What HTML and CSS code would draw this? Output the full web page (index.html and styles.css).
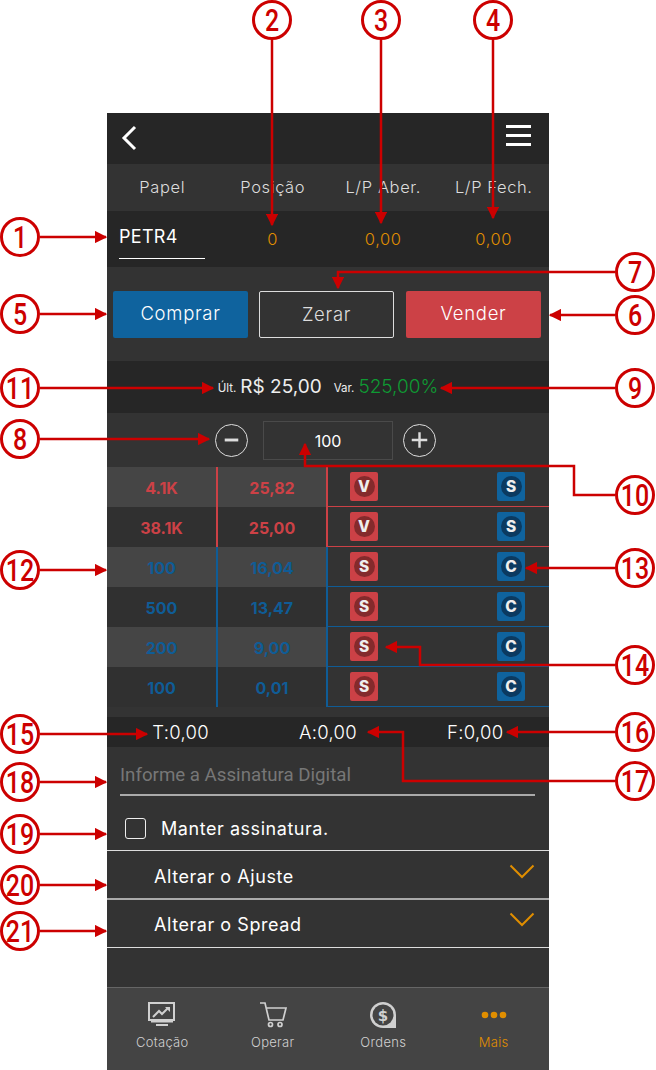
FILE: index.html
```html
<!DOCTYPE html>
<html lang="pt-BR">
<head>
    <meta charset="UTF-8">
    <meta name="viewport" content="width=device-width, initial-scale=1.0">
    <title>Boleta</title>
    <link rel="stylesheet" href="styles.css">
</head>
<body>
    <div class="phone">
        <div class="top_bar">
            <svg class="back_icon" width="16" height="26" viewBox="0 0 16 26"><path d="M14 2 L3 13 L14 24" fill="none" stroke="#fff" stroke-width="3"/></svg>
            <div class="menu_icon"><span></span><span></span><span></span></div>
        </div>

        <div class="labels">
            <div>Papel</div>
            <div>Posição</div>
            <div>L/P Aber.</div>
            <div>L/P Fech.</div>
        </div>

        <div class="values">
            <div class="paper"><span>PETR4</span></div>
            <div>0</div>
            <div>0,00</div>
            <div>0,00</div>
        </div>

        <div class="actions">
            <button class="btn buy">Comprar</button>
            <button class="btn clear">Zerar</button>
            <button class="btn sell">Vender</button>
        </div>

        <div class="quote">
            <span class="small">Últ.</span>
            <span class="price">R$ 25,00</span>
            <span class="small var">Var.</span>
            <span class="price green">525,00%</span>
        </div>

        <div class="quantity">
            <button class="round"><svg width="32" height="32" viewBox="0 0 32 32"><path d="M9 16 H23" stroke="#ddd" stroke-width="3"/></svg></button>
            <div class="qty_box">100</div>
            <button class="round"><svg width="32" height="32" viewBox="0 0 32 32"><path d="M8 16 H24 M16 8 V24" stroke="#ddd" stroke-width="2.500"/></svg></button>
        </div>

        <div class="book">
            <div class="row ask shade">
                <div class="cell">4.1K</div><div class="cell mid">25,82</div>
                <div class="acts"><span class="chip red"><i>V</i></span><span class="chip blue"><i>S</i></span></div>
            </div>
            <div class="row ask">
                <div class="cell">38.1K</div><div class="cell mid">25,00</div>
                <div class="acts"><span class="chip red"><i>V</i></span><span class="chip blue"><i>S</i></span></div>
            </div>
            <div class="row bid shade">
                <div class="cell">100</div><div class="cell mid">16,04</div>
                <div class="acts"><span class="chip red"><i>S</i></span><span class="chip blue"><i>C</i></span></div>
            </div>
            <div class="row bid">
                <div class="cell">500</div><div class="cell mid">13,47</div>
                <div class="acts"><span class="chip red"><i>S</i></span><span class="chip blue"><i>C</i></span></div>
            </div>
            <div class="row bid shade">
                <div class="cell">200</div><div class="cell mid">9,00</div>
                <div class="acts"><span class="chip red"><i>S</i></span><span class="chip blue"><i>C</i></span></div>
            </div>
            <div class="row bid">
                <div class="cell">100</div><div class="cell mid">0,01</div>
                <div class="acts"><span class="chip red"><i>S</i></span><span class="chip blue"><i>C</i></span></div>
            </div>
        </div>

        <div class="totals">
            <div>T:0,00</div>
            <div>A:0,00</div>
            <div>F:0,00</div>
        </div>

        <div class="signature">
            <input type="text" placeholder="Informe a Assinatura Digital">
        </div>

        <label class="keep">
            <span class="check"></span>
            <span>Manter assinatura.</span>
        </label>

        <div class="fold first">
            <span>Alterar o Ajuste</span>
            <svg width="26" height="15" viewBox="0 0 26 15"><path d="M1.500 1.500 L13 13 L24.500 1.500" fill="none" stroke="#e08e00" stroke-width="2"/></svg>
        </div>
        <div class="fold">
            <span>Alterar o Spread</span>
            <svg width="26" height="15" viewBox="0 0 26 15"><path d="M1.500 1.500 L13 13 L24.500 1.500" fill="none" stroke="#e08e00" stroke-width="2"/></svg>
        </div>

        <div class="spacer"></div>

        <div class="nav">
            <div class="nav_item">
                <svg width="28" height="26" viewBox="0 0 28 26" fill="none" stroke="#d0d0d0">
                    <rect x="1" y="1" width="25" height="17" stroke-width="2"/>
                    <path d="M5 15 L11 9 L14 12 L20 6" stroke-width="2"/>
                    <path d="M17 5 H22 V10 Z" fill="#d0d0d0" stroke="none"/>
                    <path d="M3 19.500 H25 M8 23 H20" stroke-width="2"/>
                </svg>
                <span>Cotação</span>
            </div>
            <div class="nav_item">
                <svg width="28" height="26" viewBox="0 0 28 26" fill="none" stroke="#d0d0d0" stroke-width="1.700">
                    <path d="M1 1 H6 L10 18 H24 L27 6 H7"/>
                    <circle cx="11.500" cy="22.500" r="2"/>
                    <circle cx="21" cy="22.500" r="2"/>
                </svg>
                <span>Operar</span>
            </div>
            <div class="nav_item">
                <svg width="28" height="26" viewBox="0 0 28 26">
                    <path d="M14 0 A13 13 0 1 0 14 26 H27 V13 A13 13 0 0 0 14 0 Z" fill="#d0d0d0"/>
                    <circle cx="14" cy="13" r="10.500" fill="#444"/>
                    <text class="coin" x="14" y="18.500" text-anchor="middle">$</text>
                </svg>
                <span>Ordens</span>
            </div>
            <div class="nav_item active">
                <svg width="28" height="26" viewBox="0 0 28 26" fill="#e08e00">
                    <circle cx="5" cy="13" r="3.300"/>
                    <circle cx="14" cy="13" r="3.300"/>
                    <circle cx="23" cy="13" r="3.300"/>
                </svg>
                <span>Mais</span>
            </div>
        </div>
    </div>

    <!-- numeros e setas da legenda -->
    <svg class="callouts" width="656" height="1070" viewBox="0 0 656 1070">
        <defs>
            <marker id="tip" markerWidth="5" markerHeight="5" refX="4.500" refY="2.500" orient="auto">
                <path d="M0 0 L5 2.500 L0 5 Z" fill="#cc0000"/>
            </marker>
        </defs>
        <g class="lines" marker-end="url(#tip)">
            <path d="M272 40 V225"/>
            <path d="M381 40 V223"/>
            <path d="M493 40 V218"/>
            <path d="M40 237 H106"/>
            <path d="M40 314 H106"/>
            <path d="M615 315 H550"/>
            <path d="M615 272 H338 V288"/>
            <path d="M40 388 H213"/>
            <path d="M615 388 H441"/>
            <path d="M40 439 H209"/>
            <path d="M615 495 H574 V466 H305 V444"/>
            <path d="M40 570 H106"/>
            <path d="M615 568 H526"/>
            <path d="M615 665 H420 V647 H386"/>
            <path d="M40 734 H147"/>
            <path d="M615 732 H507"/>
            <path d="M615 781 H403 V732 H368"/>
            <path d="M40 782 H106"/>
            <path d="M40 834 H106"/>
            <path d="M40 885 H106"/>
            <path d="M40 931 H106"/>
        </g>
        <g class="badges">
            <circle cx="20" cy="237" r="18.500"/><text x="20" y="248">1</text>
            <circle cx="272" cy="20" r="18.500"/><text x="272" y="31">2</text>
            <circle cx="381" cy="20" r="18.500"/><text x="381" y="31">3</text>
            <circle cx="493" cy="20" r="18.500"/><text x="493" y="31">4</text>
            <circle cx="20" cy="314" r="18.500"/><text x="20" y="325">5</text>
            <circle cx="635" cy="315" r="18.500"/><text x="635" y="326">6</text>
            <circle cx="635" cy="272" r="18.500"/><text x="635" y="283">7</text>
            <circle cx="20" cy="439" r="18.500"/><text x="20" y="450">8</text>
            <circle cx="635" cy="388" r="18.500"/><text x="635" y="399">9</text>
            <circle cx="635" cy="495" r="18.500"/><text x="635" y="506">10</text>
            <circle cx="20" cy="388" r="18.500"/><text x="20" y="399">11</text>
            <circle cx="20" cy="570" r="18.500"/><text x="20" y="581">12</text>
            <circle cx="635" cy="568" r="18.500"/><text x="635" y="579">13</text>
            <circle cx="635" cy="665" r="18.500"/><text x="635" y="676">14</text>
            <circle cx="20" cy="734" r="18.500"/><text x="20" y="745">15</text>
            <circle cx="635" cy="732" r="18.500"/><text x="635" y="743">16</text>
            <circle cx="635" cy="781" r="18.500"/><text x="635" y="792">17</text>
            <circle cx="20" cy="782" r="18.500"/><text x="20" y="793">18</text>
            <circle cx="20" cy="834" r="18.500"/><text x="20" y="845">19</text>
            <circle cx="20" cy="885" r="18.500"/><text x="20" y="896">20</text>
            <circle cx="20" cy="931" r="18.500"/><text x="20" y="942">21</text>
        </g>
    </svg>
</body>
</html>
```

FILE: styles.css
```css
body{
    margin: 0;
    background: #fff;
    font-family: Inter, "Noto Sans", sans-serif;
    color: #fff;
}

.phone{
    width: 442px;
    height: 957px;
    margin: 113px 0 0 107px;
    background: #333;
    display: flex;
    flex-direction: column;
}

.top_bar{
    height: 51px;
    padding: 0 18px 0 14px;
    background: #262626;
    display: flex;
    justify-content: space-between;
}

.back_icon{
    margin-top: 12px;
}

.menu_icon{
    width: 25px;
    margin-top: 12px;
    display: flex;
    flex-direction: column;
    gap: 6px;
}

.menu_icon span{
    height: 3px;
    background: #fff;
}

.labels, .values{
    display: grid;
    grid-template-columns: repeat(4, 1fr);
    text-align: center;
}

.labels{
    height: 47px;
    line-height: 46px;
    font-size: 16.500px;
    letter-spacing: 0.600px;
    font-weight: 300;
    color: #ddd;
}

.values{
    height: 56px;
    line-height: 57px;
    background: #262626;
    font-size: 16.500px;
    letter-spacing: 0.600px;
    font-weight: 300;
    color: #e08e00;
}

.paper{
    padding-left: 12px;
    text-align: left;
    color: #fff;
    font-size: 18px;
    letter-spacing: 0.300px;
    font-weight: 400;
}

.paper span{
    display: block;
    width: 86px;
    height: 47px;
    line-height: 52px;
    border-bottom: 1px solid #fff;
}

.actions{
    height: 94px;
    padding: 24px 8px 0 6px;
    box-sizing: border-box;
    display: flex;
    gap: 11px;
}

.btn{
    width: 135px;
    height: 47px;
    padding: 0 0 3px 0;
    border: none;
    border-radius: 2px;
    font-family: inherit;
    font-size: 18.500px;
    letter-spacing: 0.700px;
    font-weight: 300;
    color: #fff;
}

.buy{
    background: #0f639e;
}

.clear{
    background: transparent;
    border: 1px solid #ddd;
    padding: 0 0 2px 0;
    color: #ddd;
}

.sell{
    margin-left: 1px;
    background: #cc4146;
}

.quote{
    height: 52px;
    background: #262626;
    display: flex;
    justify-content: center;
    align-items: center;
    gap: 4px;
    padding-bottom: 2px;
    box-sizing: border-box;
}

.small{
    font-size: 11.500px;
    margin-top: 4px;
    color: #eee;
}

.var{
    margin-left: 8px;
}

.price{
    font-size: 19px;
    font-weight: 400;
    color: #eee;
}

.green{
    color: #0e9a33;
    font-weight: 300;
}

.quantity{
    height: 54px;
    display: flex;
    justify-content: center;
    align-items: center;
    gap: 10px;
    padding-right: 5px;
    box-sizing: border-box;
}

.quantity .round:first-child{
    margin-right: 5px;
}

.round{
    width: 33px;
    height: 33px;
    padding: 0;
    border: 1px solid #ddd;
    border-radius: 50%;
    background: transparent;
    display: flex;
    align-items: center;
    justify-content: center;
}

.qty_box{
    width: 130px;
    height: 39px;
    line-height: 39px;
    box-sizing: border-box;
    border: 1px solid #4a4a4a;
    text-align: center;
    font-size: 16px;
}

.book{
    height: 250px;
}

.row{
    height: 40px;
    display: grid;
    grid-template-columns: 109px 110px 223px;
    grid-template-rows: 40px;
    font-size: 16px;
    font-weight: 700;
    text-align: center;
    line-height: 42px;
    background: #303030;
}

.row.shade .cell{
    background: #454545;
}

.ask{
    color: #cc4146;
}

.bid{
    color: #0f5c96;
}

.mid{
    border-left: 2px solid currentColor;
}

.acts{
    border-left: 2px solid currentColor;
    border-bottom: 1px solid currentColor;
    background: #333;
    padding: 5px 24px 0 22px;
    box-sizing: border-box;
    display: flex;
    justify-content: space-between;
    align-items: flex-start;
}

.chip{
    width: 28px;
    height: 29px;
    border-radius: 2px;
    display: flex;
    align-items: center;
    justify-content: center;
}

.chip.red{
    background: #cc4146;
}

.chip.blue{
    background: #0f639e;
}

.chip i{
    width: 21px;
    height: 21px;
    line-height: 21px;
    border-radius: 50%;
    font-style: normal;
    font-size: 15.500px;
    font-weight: 800;
    color: #eee;
}

.chip.red i{
    background: #842a2c;
}

.chip.blue i{
    background: #0b3a60;
}

.totals{
    height: 30px;
    line-height: 30px;
    background: #262626;
    display: grid;
    grid-template-columns: repeat(3, 1fr);
    text-align: center;
    font-size: 18.500px;
    letter-spacing: 0.300px;
    font-weight: 300;
}

.signature{
    padding: 0 14px 0 13px;
}

.signature input{
    width: 100%;
    height: 49px;
    padding: 8px 0 0 0;
    box-sizing: border-box;
    background: transparent;
    border: none;
    border-bottom: 2px solid #aaa;
    outline: none;
    font-family: Roboto, sans-serif;
    font-size: 18.700px;
    color: #fff;
}

.signature input::placeholder{
    color: #777;
    opacity: 1;
}

.keep{
    height: 54px;
    padding: 10px 0 0 18px;
    box-sizing: border-box;
    display: flex;
    align-items: center;
    gap: 15px;
    font-size: 18px;
    letter-spacing: 0.550px;
}

.check{
    width: 21px;
    height: 21px;
    box-sizing: border-box;
    border: 1px solid #eee;
    border-radius: 3px;
}

.fold{
    height: 48px;
    padding: 2px 14px 0 47px;
    box-sizing: border-box;
    border-bottom: 1px solid #ddd;
    display: flex;
    justify-content: space-between;
    align-items: center;
    font-size: 18px;
    letter-spacing: 0.550px;
}

.fold svg{
    margin-top: -10px;
}

.first{
    height: 50px;
    padding-top: 4px;
    border-top: 1px solid #ddd;
    border-bottom: 2px solid #aaa;
}

.spacer{
    flex: 1;
}

.nav{
    height: 83px;
    background: #444;
    border-top: 1px solid #666;
    box-sizing: border-box;
    display: grid;
    grid-template-columns: repeat(4, 1fr);
}

.nav_item{
    padding-top: 14px;
    display: flex;
    flex-direction: column;
    align-items: center;
    gap: 6px;
    font-size: 13px;
    letter-spacing: 0.300px;
    font-weight: 300;
    color: #d0d0d0;
}

.nav_item.active{
    color: #e08e00;
}

.coin{
    font-family: "DejaVu Sans", sans-serif;
    font-size: 15px;
    font-weight: 700;
    fill: #d0d0d0;
}

.callouts{
    position: absolute;
    left: 0;
    top: 0;
}

.lines path{
    fill: none;
    stroke: #cc0000;
    stroke-width: 2.500;
}

.badges circle{
    fill: #fff;
    stroke: #cc0000;
    stroke-width: 3;
}

.badges text{
    font-family: Roboto, sans-serif;
    font-size: 32px;
    font-weight: 500;
    fill: #cc0000;
    text-anchor: middle;
    transform-box: fill-box;
    transform-origin: center;
    transform: scaleX(0.78);
}
```
